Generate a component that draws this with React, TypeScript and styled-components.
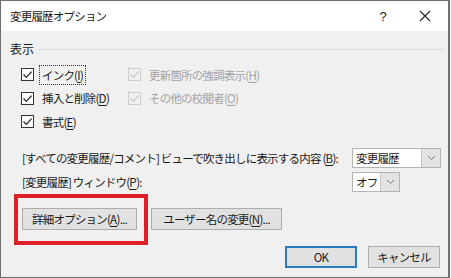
import React from 'react';
import styled, { createGlobalStyle } from 'styled-components';

const GlobalStyle = createGlobalStyle`
  html, body {
    margin: 0;
    padding: 0;
    background: #f7f7f7;
  }
  body {
    font-family: "Noto Sans CJK JP", "Noto Sans", sans-serif;
    font-size: 11.5px;
    letter-spacing: -0.8px;
    color: #1a1a1a;
  }
`;

const Window = styled.div`
  box-sizing: border-box;
  width: 450px;
  height: 278px;
  border: 1px solid #6e6e6e;
  border-right-width: 2px;
  display: flex;
  flex-direction: column;
  background: #f0f0f0;
`;

const TitleBar = styled.div`
  height: 30px;
  background: #fff;
  display: flex;
  align-items: center;
  padding-left: 9px;
`;

const Title = styled.span`
  flex: 1;
  line-height: 14px;
`;

const TitleButton = styled.span<{ $width: number }>`
  width: ${p => p.$width}px;
  display: flex;
  justify-content: center;
  align-items: center;
  font-size: 13px;
  letter-spacing: 0;
  font-family: "Liberation Sans", sans-serif;
`;

const Body = styled.div`
  flex: 1;
  display: flex;
  flex-direction: column;
  padding: 10px 8px 0 9px;
`;

const GroupHeader = styled.div`
  display: flex;
  align-items: center;
  gap: 5px;
  height: 16px;
  line-height: 16px;
  font-size: 12px;
  letter-spacing: 0;
  margin-right: -4px;
`;

const GroupLine = styled.div`
  flex: 1;
  height: 1px;
  background: #dcdcdc;
`;

const CheckGrid = styled.div`
  display: grid;
  grid-template-columns: 107px auto;
  grid-auto-rows: 23.5px;
  margin: 6px 0 0 11px;
`;

const CheckItem = styled.label<{ $disabled?: boolean }>`
  display: flex;
  align-items: center;
  gap: 6px;
  color: ${p => (p.$disabled ? '#a3a3a3' : '#1a1a1a')};
  line-height: 14px;
`;

const Box = styled.span<{ $disabled?: boolean }>`
  box-sizing: border-box;
  width: 13px;
  height: 13px;
  border: 1px solid ${p => (p.$disabled ? '#cccccc' : '#333')};
  background: ${p => (p.$disabled ? '#f0f0f0' : '#fff')};
  display: flex;
  align-items: center;
  justify-content: center;
`;

const CheckLabel = styled.span<{ $focused?: boolean }>`
  padding: 2px 2px;
  margin-left: -1px;
  white-space: nowrap;
  border: 1px dotted ${p => (p.$focused ? '#333' : 'transparent')};
`;

const Key = styled.span`
  text-decoration: underline;
  text-underline-offset: 2px;
  letter-spacing: 0;
  margin-right: -0.5px;
`;

const SettingGrid = styled.div`
  display: grid;
  grid-template-columns: 330px auto;
  row-gap: 4px;
  align-items: center;
  margin: 14px 0 0 12px;
`;

const SettingLabel = styled.span`
  line-height: 14px;
  white-space: nowrap;
`;

const Select = styled.div<{ $width: number }>`
  box-sizing: border-box;
  width: ${p => p.$width}px;
  height: 20px;
  display: flex;
  background: #fff;
  border: 1px solid #b4b4b4;
`;

const SelectValue = styled.span`
  flex: 1;
  padding-left: 3px;
  line-height: 18px;
`;

const SelectArrow = styled.span`
  width: 18px;
  background: #e3e3e3;
  border-left: 1px solid #c8c8c8;
  display: flex;
  align-items: center;
  justify-content: center;
`;

const ButtonRow = styled.div`
  display: flex;
  align-items: center;
  gap: 3px;
  margin: 2px 0 0 4px;
`;

const Highlight = styled.div`
  box-sizing: border-box;
  width: 134px;
  height: 51px;
  border: 4px solid #de1f27;
  display: flex;
  align-items: center;
  padding: 0 0 0 4px;
`;

const Button = styled.button<{ $width: number; $default?: boolean }>`
  box-sizing: border-box;
  width: ${p => p.$width}px;
  height: 22px;
  padding: 0;
  font: inherit;
  letter-spacing: inherit;
  color: #1a1a1a;
  background: #e1e1e1;
  border: ${p => (p.$default ? '2px solid #2a7cc0' : '1px solid #adadad')};
  line-height: 14px;
  white-space: nowrap;
`;

const Footer = styled.div`
  display: flex;
  justify-content: flex-end;
  gap: 11px;
  margin-top: 1px;
`;

const Check = ({ disabled }: { disabled?: boolean }) => (
  <Box $disabled={disabled}>
    <svg width="11" height="11" viewBox="0 0 11 11">
      <path d="M1.5 5.5 L4.3 8.3 L9.6 2.6" fill="none" stroke={disabled ? '#c4c4c4' : '#222'} strokeWidth="1.2" />
    </svg>
  </Box>
);

const Chevron = () => (
  <svg width="9" height="6" viewBox="0 0 9 6">
    <path d="M1 1 L4.5 4.5 L8 1" fill="none" stroke="#777" strokeWidth="1" />
  </svg>
);

const App = () => (
  <>
    <GlobalStyle />
    <Window>
      <TitleBar>
        <Title>変更履歴オプション</Title>
        <TitleButton $width={38}>?</TitleButton>
        <TitleButton $width={46}>
          <svg width="12" height="12" viewBox="0 0 12 12">
            <path d="M1 1 L11 11 M11 1 L1 11" stroke="#222" strokeWidth="1.1" />
          </svg>
        </TitleButton>
      </TitleBar>
      <Body>
        <GroupHeader>
          <span>表示</span>
          <GroupLine />
        </GroupHeader>
        <CheckGrid>
          <CheckItem>
            <Check />
            <CheckLabel $focused>
              インク(<Key>I</Key>)
            </CheckLabel>
          </CheckItem>
          <CheckItem $disabled>
            <Check disabled />
            <CheckLabel>
              更新箇所の強調表示(<Key>H</Key>)
            </CheckLabel>
          </CheckItem>
          <CheckItem>
            <Check />
            <CheckLabel>
              挿入と削除(<Key>D</Key>)
            </CheckLabel>
          </CheckItem>
          <CheckItem $disabled>
            <Check disabled />
            <CheckLabel>
              その他の校閲者(<Key>O</Key>)
            </CheckLabel>
          </CheckItem>
          <CheckItem>
            <Check />
            <CheckLabel>
              書式(<Key>E</Key>)
            </CheckLabel>
          </CheckItem>
        </CheckGrid>
        <SettingGrid>
          <SettingLabel>
            [すべての変更履歴/コメント] ビューで吹き出しに表示する内容 (<Key>B</Key>):
          </SettingLabel>
          <Select $width={89}>
            <SelectValue>変更履歴</SelectValue>
            <SelectArrow>
              <Chevron />
            </SelectArrow>
          </Select>
          <SettingLabel>
            [変更履歴] ウィンドウ(<Key>P</Key>):
          </SettingLabel>
          <Select $width={48}>
            <SelectValue>オフ</SelectValue>
            <SelectArrow>
              <Chevron />
            </SelectArrow>
          </Select>
        </SettingGrid>
        <ButtonRow>
          <Highlight>
            <Button $width={115}>
              詳細オプション(<Key>A</Key>)...
            </Button>
          </Highlight>
          <Button $width={131}>
            ユーザー名の変更(<Key>N</Key>)...
          </Button>
        </ButtonRow>
        <Footer>
          <Button $width={72} $default>
            OK
          </Button>
          <Button $width={72}>キャンセル</Button>
        </Footer>
      </Body>
    </Window>
  </>
);

export default App;
